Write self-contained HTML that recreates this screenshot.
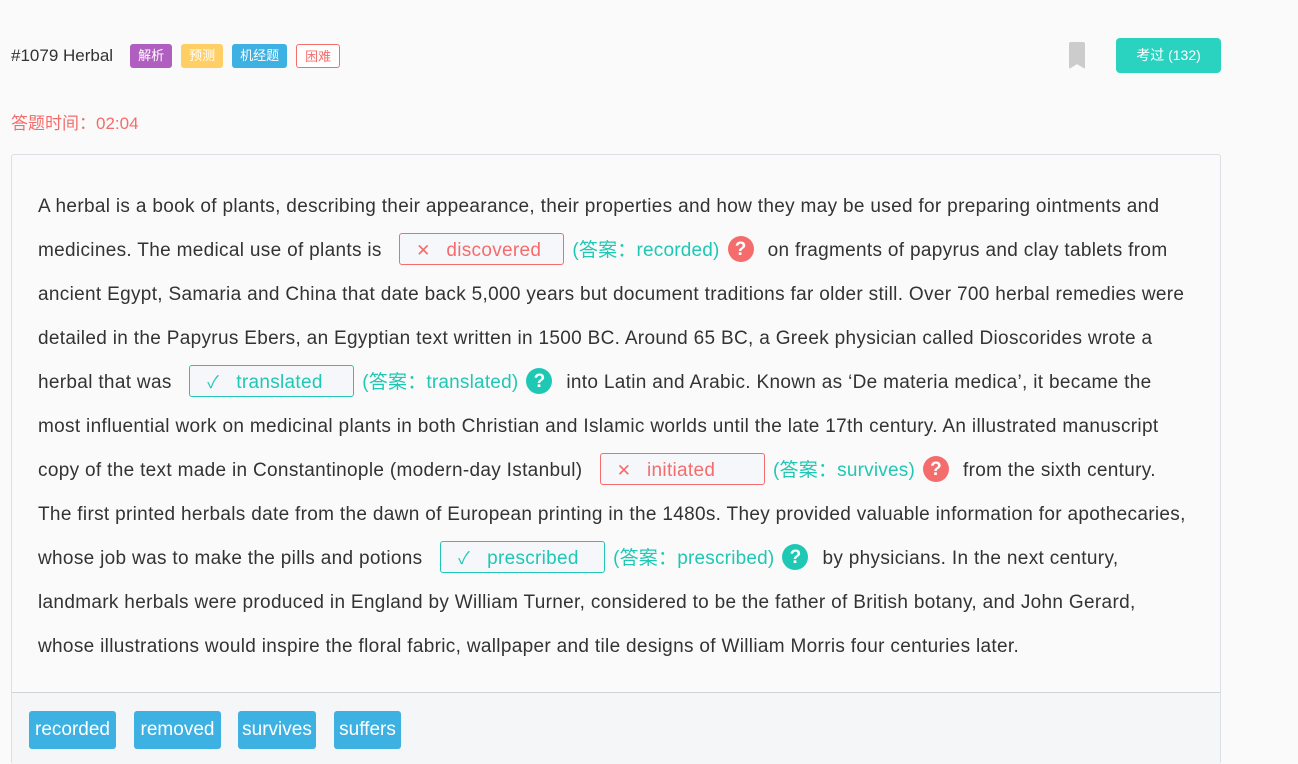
<!DOCTYPE html>
<html><head><meta charset="utf-8"><style>
html{overflow:hidden}
body{margin:0;background:#fafafa;font-family:"Liberation Sans","Noto Sans CJK SC",sans-serif;width:1298px;height:764px;overflow:hidden;position:relative;color:#333}
.hdr{position:absolute;left:11px;top:44px;font-size:17px;color:#333;display:flex;align-items:center}
.tag{display:inline-block;height:24px;line-height:24px;padding:0 8px;border-radius:3px;font-size:13px;color:#fff;margin-left:9px;box-sizing:border-box}
.time{position:absolute;left:11px;top:109px;font-size:17px;color:#f56c6c}
.bm{position:absolute;left:1069px;top:42px;width:16px;height:27px;background:#ccc;clip-path:polygon(0 0,100% 0,100% 100%,50% 82%,0 100%);border-radius:2px}
.btn{position:absolute;left:1116px;top:38px;width:105px;height:35px;background:#2ad3c0;border-radius:4px;color:#fff;font-size:14px;text-align:center;line-height:35px}
.box{position:absolute;left:11px;top:154px;width:1208px;height:609px;border:1px solid #dcdfe6;border-bottom:none;border-radius:3px;background:#fafafa;overflow:hidden}
.txt{position:absolute;left:26px;top:30px;font-size:19px;color:#333;letter-spacing:0.32px}
.ln{height:44px;line-height:44px;white-space:nowrap}
.bl{display:inline-block;width:165px;height:32px;box-sizing:border-box;border:1px solid #f56c6c;border-radius:3px;background:#f5f7fa;vertical-align:middle;line-height:34px;color:#f56c6c;margin:0 8px 0 12px;font-size:19px;position:relative;top:-2px;letter-spacing:0.3px}
.bl span.i{display:inline-block;width:46px;text-align:center;font-size:17px}
.bl.ok{border-color:#1fc8b4;color:#1fc8b4}
.ans{color:#1fc8b4;letter-spacing:0.2px}
.q{display:inline-block;width:26px;height:26px;border-radius:50%;color:#fff;font-weight:bold;text-align:center;line-height:27px;font-size:19px;vertical-align:middle;margin:0 14px 0 8px;position:relative;top:-2px;letter-spacing:0}
.q.r{background:#f56c6c}.q.g{background:#1fc8b4}
.bot{position:absolute;left:0;top:537px;width:1208px;height:90px;border-top:1px solid #d0d3d8;background:#f5f6f8}
.w{position:absolute;top:18px;height:38px;line-height:38px;background:#3eb1e3;color:#fff;font-size:19px;border-radius:3px;text-align:center}
</style></head><body>
<div class="hdr">#1079 Herbal
<span class="tag" style="background:#b05fc0;margin-left:17px">解析</span>
<span class="tag" style="background:#ffcf66">预测</span>
<span class="tag" style="background:#3eb1e3">机经题</span>
<span class="tag" style="border:1px solid #f56c6c;color:#f56c6c;background:#fff">困难</span></div>
<div class="time">答题时间：02:04</div>
<div class="bm"></div>
<div class="btn">考过 (132)</div>
<div class="box">
<div class="txt">
<div class="ln">A herbal is a book of plants, describing their appearance, their properties and how they may be used for preparing ointments and</div>
<div class="ln">medicines. The medical use of plants is <span class="bl"><span class="i">✕</span>discovered</span><span class="ans">(答案：recorded)</span><span class="q r">?</span>on fragments of papyrus and clay tablets from</div>
<div class="ln">ancient Egypt, Samaria and China that date back 5,000 years but document traditions far older still. Over 700 herbal remedies were</div>
<div class="ln">detailed in the Papyrus Ebers, an Egyptian text written in 1500 BC. Around 65 BC, a Greek physician called Dioscorides wrote a</div>
<div class="ln">herbal that was <span class="bl ok"><span class="i">✓</span>translated</span><span class="ans">(答案：translated)</span><span class="q g">?</span>into Latin and Arabic. Known as ‘De materia medica’, it became the</div>
<div class="ln">most influential work on medicinal plants in both Christian and Islamic worlds until the late 17th century. An illustrated manuscript</div>
<div class="ln">copy of the text made in Constantinople (modern-day Istanbul) <span class="bl"><span class="i">✕</span>initiated</span><span class="ans">(答案：survives)</span><span class="q r">?</span>from the sixth century.</div>
<div class="ln">The first printed herbals date from the dawn of European printing in the 1480s. They provided valuable information for apothecaries,</div>
<div class="ln">whose job was to make the pills and potions <span class="bl ok"><span class="i">✓</span>prescribed</span><span class="ans">(答案：prescribed)</span><span class="q g">?</span>by physicians. In the next century,</div>
<div class="ln">landmark herbals were produced in England by William Turner, considered to be the father of British botany, and John Gerard,</div>
<div class="ln">whose illustrations would inspire the floral fabric, wallpaper and tile designs of William Morris four centuries later.</div>
</div>
<div class="bot">
<div class="w" style="left:17px;width:87px">recorded</div>
<div class="w" style="left:122px;width:87px">removed</div>
<div class="w" style="left:226px;width:78px">survives</div>
<div class="w" style="left:322px;width:67px">suffers</div>
</div>
</div>
</body></html>
